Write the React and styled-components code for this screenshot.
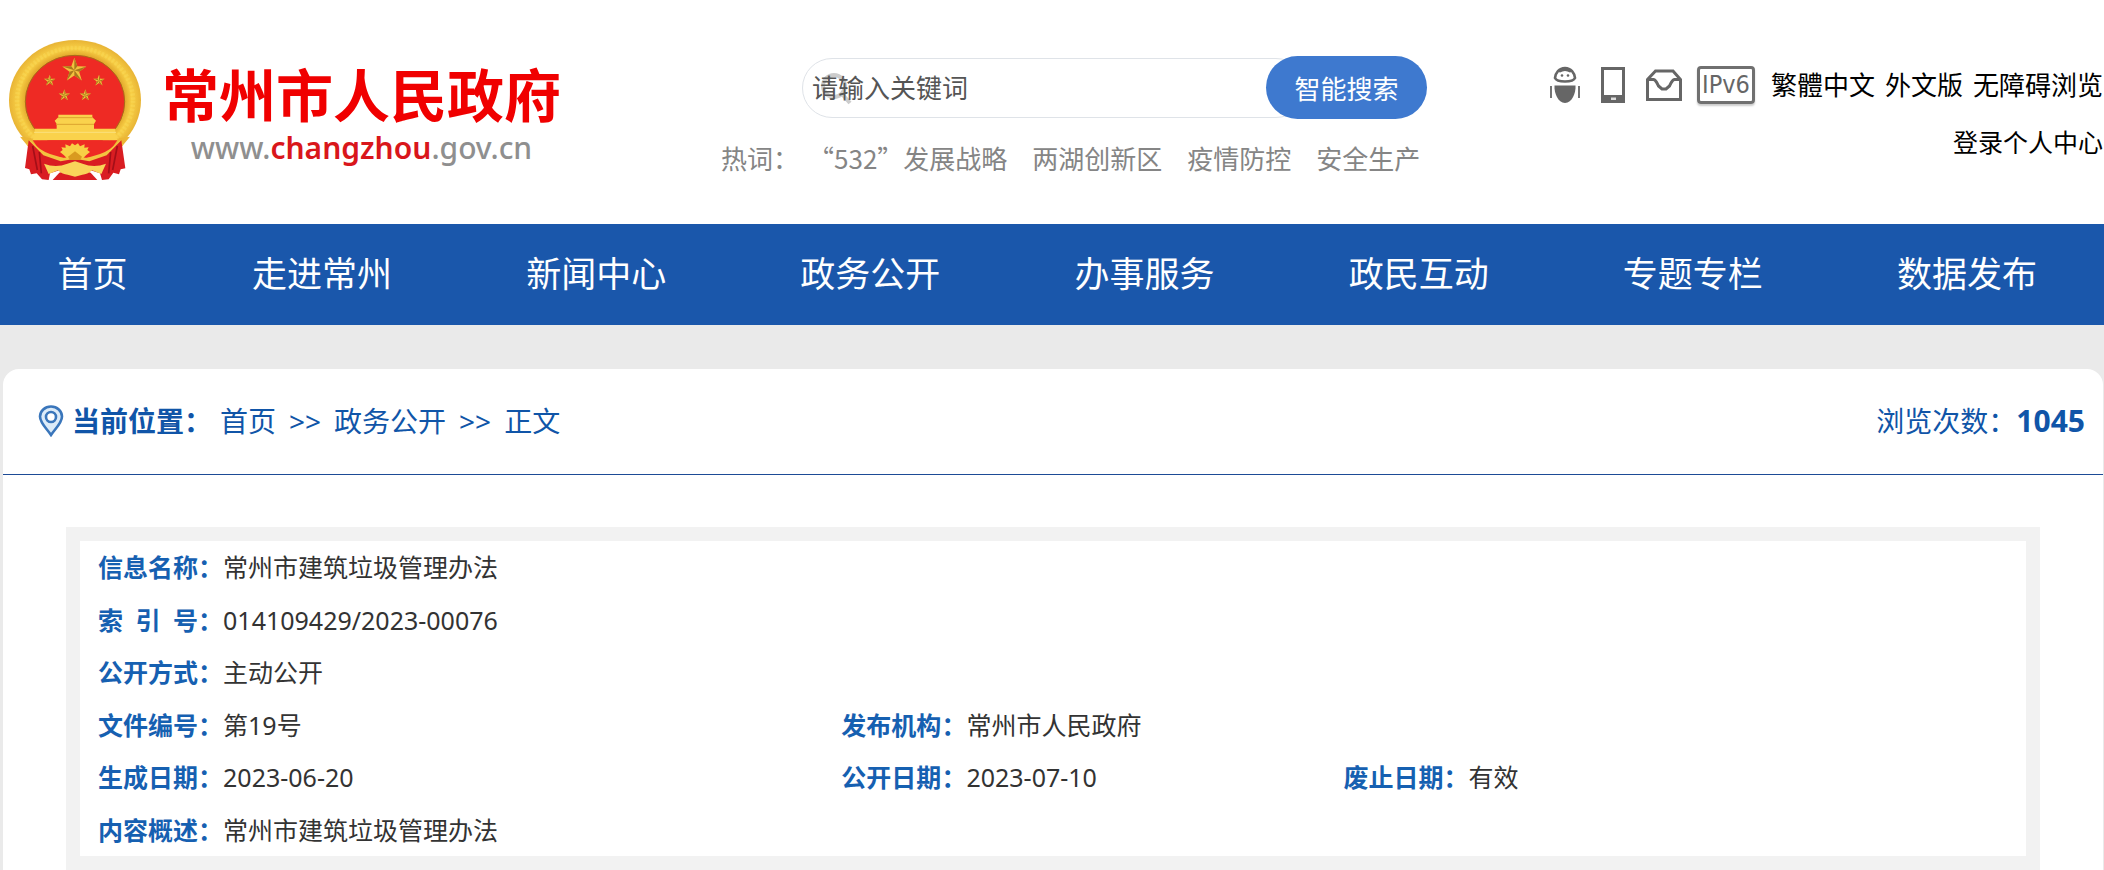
import styled, { createGlobalStyle } from 'styled-components'

const GlobalStyle = createGlobalStyle`
  * {
    box-sizing: border-box;
  }
  body {
    margin: 0;
    background: #eaeaea;
    font-family: 'Noto Sans', 'Noto Sans CJK SC', sans-serif;
    color: #333;
  }
  a {
    color: inherit;
    text-decoration: none;
  }
`

const Header = styled.header`
  display: grid;
  grid-template-columns: 721fr 706fr 677fr;
  height: 224px;
  background: #fff;
`

const Logo = styled.a`
  display: flex;
  padding: 40px 0 0 9px;
`

const LogoText = styled.div`
  display: flex;
  flex-direction: column;
  align-items: center;
  margin-left: 21px;
  padding-top: 26px;
`

const SiteName = styled.h1`
  margin: 0;
  font-family: 'Liberation Sans', 'Noto Sans CJK SC', sans-serif;
  font-size: 57px;
  line-height: 62px;
  font-weight: 700;
  color: #f00000;
`

const SiteUrl = styled.span`
  font-family: 'Noto Sans', sans-serif;
  font-size: 30px;
  line-height: 40px;
  font-weight: 500;
  color: #8f8f8f;
`

const UrlName = styled.b`
  font-weight: 600;
  color: #d9161b;
`

const Search = styled.div`
  padding-top: 56px;
`

const SearchForm = styled.form`
  position: relative;
  display: flex;
  align-items: center;
  margin-left: 81px;
`

const SearchIcon = styled.svg`
  position: absolute;
  left: 18px;
  top: 16px;
`

const SearchInput = styled.input`
  position: relative;
  flex: 1;
  min-width: 0;
  height: 60px;
  margin-right: -40px;
  padding: 0 50px 0 9px;
  border: 1px solid #dfe3e8;
  border-radius: 30px;
  background: transparent;
  font: inherit;
  font-size: 26px;
  outline: none;
  &::placeholder {
    color: #555;
    opacity: 1;
  }
`

const SearchButton = styled.button`
  position: relative;
  width: 161px;
  height: 63px;
  border: none;
  border-radius: 32px;
  background: #3e79cf;
  color: #fff;
  font: inherit;
  font-size: 26px;
  cursor: pointer;
`

const HotWords = styled.div`
  display: flex;
  gap: 25px;
  margin-top: 19px;
  font-family: 'Noto Sans CJK SC', sans-serif;
  font-size: 26px;
  line-height: 40px;
  color: #858585;
  white-space: nowrap;
`

const HotLabel = styled.span`
  margin-right: -16px;
`

const Tools = styled.div`
  display: flex;
  flex-direction: column;
  align-items: flex-end;
  padding: 65px 1px 0 0;
  color: #000;
  white-space: nowrap;
`

const ToolRow = styled.div`
  display: flex;
  align-items: center;
  gap: 10px;
  font-size: 26px;
  line-height: 40px;
`

const IconLinks = styled.div`
  display: flex;
  align-items: center;
  gap: 21px;
  margin-right: 6px;
  color: #666;
  a {
    display: flex;
  }
`

const Ipv6 = styled.a`
  justify-content: center;
  width: 58px;
  height: 38px;
  margin-left: -6px;
  border: 3px solid #707070;
  border-radius: 4px;
  box-shadow: 0 2px 2px #ccc;
  font-family: 'Liberation Sans Narrow', 'DejaVu Sans Condensed', sans-serif;
  font-size: 25px;
  line-height: 32px;
`

const Login = styled.a`
  margin-top: 17px;
  font-size: 25px;
  line-height: 40px;
`

const Nav = styled.nav`
  display: flex;
  align-items: center;
  height: 101px;
  padding-bottom: 2px;
  background: #1a57ab;
`

const NavItem = styled.a`
  flex: ${props => (props.$short ? '0 0 185px' : '1')};
  font-size: 35px;
  line-height: 50px;
  text-align: center;
  color: #fff;
`

const Card = styled.main`
  margin: 44px 1px 0 3px;
  border-radius: 16px 16px 0 0;
  background: #fff;
`

const Position = styled.div`
  display: flex;
  align-items: center;
  height: 106px;
  padding: 0 18px 2px 35px;
  border-bottom: 1px solid #1d4b96;
  font-size: 28px;
  line-height: 40px;
  color: #1055a8;
`

const Crumbs = styled.div`
  display: flex;
  flex: 1;
  b {
    margin: 0 8px;
  }
`

const Separator = styled.span`
  margin: 0 13px;
`

const Count = styled.b`
  font-size: 30px;
`

const Details = styled.section`
  margin: 52px 63px 0;
  border: 14px solid #f2f2f2;
`

const Table = styled.table`
  width: 100%;
  height: 315px;
  border-collapse: collapse;
  table-layout: fixed;
  font-size: 25px;
  line-height: 36px;
`

const Cell = styled.td`
  padding: 0 0 0 18px;
`

const Label = styled.b`
  color: #1660b1;
`

const navItems = [
  '首页',
  '走进常州',
  '新闻中心',
  '政务公开',
  '办事服务',
  '政民互动',
  '专题专栏',
  '数据发布'
]

const hotWords = ['“532”发展战略', '两湖创新区', '疫情防控', '安全生产']

const rows = [
  [['信息名称', '常州市建筑垃圾管理办法']],
  [['索\u2002引\u2002号', '014109429/2023-00076']],
  [['公开方式', '主动公开']],
  [
    ['文件编号', '第19号'],
    ['发布机构', '常州市人民政府']
  ],
  [
    ['生成日期', '2023-06-20'],
    ['公开日期', '2023-07-10'],
    ['废止日期', '有效']
  ],
  [['内容概述', '常州市建筑垃圾管理办法']]
]

const Star = ({ x, y, r }) => (
  <g transform={`translate(${x} ${y}) scale(${r})`}>
    <path
      d="M0-1 .24-.32 .95-.31 .38 .12 .59 .81 0 .4-.59 .81-.38 .12-.95-.31-.24-.32Z"
      fill="#f3c13e"
    />
    <path
      d="M0-1V0L.24-.32ZM.95-.31 0 0 .38 .12ZM.59 .81 0 0V.4ZM-.59 .81 0 0-.38 .12ZM-.95-.31 0 0-.24-.32Z"
      fill="#a9791c"
    />
  </g>
)

const Emblem = () => (
  <svg width="132" height="140" viewBox="27 30 396 420" aria-hidden="true">
    <defs>
      <radialGradient id="gold">
        <stop offset="0.74" stopColor="#e0a52a" />
        <stop offset="0.86" stopColor="#f8cf45" />
        <stop offset="1" stopColor="#e8b435" />
      </radialGradient>
    </defs>
    <ellipse cx="225" cy="211" rx="198" ry="181" fill="url(#gold)" />
    <path d="M60 320 120 392 225 425 330 392 390 320 225 340Z" fill="#ecb634" />
    <ellipse
      cx="225"
      cy="212"
      rx="174"
      ry="158"
      fill="none"
      stroke="#fbdc5c"
      strokeWidth="14"
      strokeDasharray="7 5"
      opacity="0.4"
    />
    <ellipse
      cx="225"
      cy="215"
      rx="149"
      ry="139"
      fill="#ee2a24"
      stroke="#a86a18"
      strokeWidth="3"
    />
    <Star x={223} y={121} r={38} />
    <Star x={149} y={152} r={18} />
    <Star x={297} y={152} r={18} />
    <Star x={193} y={196} r={18} />
    <Star x={256} y={196} r={18} />
    <path
      d="M175 254H277V262L288 272 282 282V296H346V308L352 331H98L104 308V296H170V282L164 272 175 262Z"
      fill="#fad24c"
    />
    <path d="M174 263H278M168 283H282" stroke="#dda32e" strokeWidth="3" />
    <path d="M102 307H348" stroke="#fbe07c" strokeWidth="3" />
    <path d="M98 331H352Q330 368 300 378L225 388 150 378Q120 368 98 331Z" fill="#ee2a24" />
    <path
      d="M92 331Q118 362 150 372L190 384Q225 376 260 384L300 372Q332 362 358 331L370 345 300 402H150L80 345Z"
      fill="#f3c440"
    />
    <path
      d="M86 331 130 376 182 394 225 386 268 394 320 376 364 331 376 415 362 418 357 433 340 428 326 448 306 450 300 430 225 406 150 430 146 450 126 448 110 430 93 433 88 418 75 414Z"
      fill="#d91d22"
    />
    <path
      d="M98 348 112 420M118 366 124 430M352 348 338 420M332 366 326 430"
      stroke="#a40f18"
      strokeWidth="5"
      fill="none"
    />
    <path d="M158 450 178 428 225 412 272 428 292 450Z" fill="#d91d22" />
    <path
      d="M192 376 180 366 188 360 184 352 197 353 196 343 210 349 216 340 225 346 234 340 240 349 254 343 253 353 266 352 262 360 270 366 258 376 250 384H200Z"
      fill="#f8cf45"
    />
    <path d="M204 380 225 364 246 380 240 390H210Z" fill="#d99a20" />
    <path
      d="M132 401Q168 415 202 401L225 394 248 401Q282 415 318 401L304 432 276 421Q262 434 247 434L225 440 203 434Q188 434 174 421L146 432Z"
      fill="#f9d45a"
    />
  </svg>
)

const RobotIcon = () => (
  <svg width="30" height="38" viewBox="0 0 30 38" fill="currentColor" aria-hidden="true">
    <path
      d="M15 2C9 2 5.500 7 5 12 6 14.300 9.500 15.500 15 15.500S24 14.300 25 12C24.500 7 21 2 15 2Z"
      fill="#fff"
      stroke="currentColor"
      strokeWidth="2.6"
    />
    <path d="M7.500 5.500Q15-3 22.500 5.500L20 6.500Q15 3.500 10 6.500Z" />
    <circle cx="12" cy="9.500" r="1.300" />
    <circle cx="18" cy="9.500" r="1.300" />
    <path d="M4.500 19.500H25.500C26 27 22 37 15 37S4 27 4.500 19.500Z" />
    <path d="M1 20V32M29 20V32" stroke="currentColor" strokeWidth="1.800" />
  </svg>
)

const PhoneIcon = () => (
  <svg width="24" height="36" viewBox="0 0 24 36" aria-hidden="true">
    <rect x="1.5" y="1.500" width="21" height="33" fill="#fff" stroke="currentColor" strokeWidth="3" />
    <path d="M1 28H23V35H1Z" fill="currentColor" />
    <rect x="10" y="30.500" width="5" height="2.500" fill="#ddd" />
  </svg>
)

const MailIcon = () => (
  <svg
    width="36"
    height="32"
    viewBox="0 0 36 32"
    fill="none"
    stroke="currentColor"
    strokeWidth="3"
    aria-hidden="true"
  >
    <path d="M1.500 10.500 9.500 2H27L34.500 10.500V30.500H1.500Z" />
    <path d="M1.500 10.500H7.500C10 11 11 14 12.500 17L16 20H20L23.500 17C25 14 26 11 28.500 10.500H34.500" />
  </svg>
)

const PinIcon = () => (
  <svg
    width="26"
    height="32"
    viewBox="0 0 26 32"
    fill="none"
    stroke="#3a76bb"
    strokeWidth="2.6"
    aria-hidden="true"
  >
    <path
      d="M13 30C9 24 2 18 2 11.500A11 10 0 0 1 24 11.500C24 18 17 24 13 30Z"
      fill="#dcebf8"
    />
    <circle cx="13" cy="12" r="5" fill="#fff" />
  </svg>
)

const App = () => {
  return (
    <>
      <GlobalStyle />
      <Header>
        <Logo href="#">
          <Emblem />
          <LogoText>
            <SiteName>常州市人民政府</SiteName>
            <SiteUrl>
              www.<UrlName>changzhou</UrlName>.gov.cn
            </SiteUrl>
          </LogoText>
        </Logo>
        <Search>
          <SearchForm>
            <SearchIcon width="33" height="34" fill="none" stroke="#ccc" strokeWidth="4" aria-hidden="true">
              <circle cx="14" cy="14" r="11" />
              <path d="M22 22 30 31" />
            </SearchIcon>
            <SearchInput type="text" aria-label="请输入关键词" placeholder="请输入关键词" />
            <SearchButton type="button">智能搜索</SearchButton>
          </SearchForm>
          <HotWords>
            <HotLabel>热词：</HotLabel>
            {hotWords.map(word => (
              <a href="#" key={word}>
                {word}
              </a>
            ))}
          </HotWords>
        </Search>
        <Tools>
          <ToolRow>
            <IconLinks>
              <a href="#" aria-label="智能机器人">
                <RobotIcon />
              </a>
              <a href="#" aria-label="手机版">
                <PhoneIcon />
              </a>
              <a href="#" aria-label="邮箱">
                <MailIcon />
              </a>
              <Ipv6 href="#">IPv6</Ipv6>
            </IconLinks>
            <a href="#">繁體中文</a>
            <a href="#">外文版</a>
            <a href="#">无障碍浏览</a>
          </ToolRow>
          <Login href="#">登录个人中心</Login>
        </Tools>
      </Header>
      <Nav>
        {navItems.map(item => (
          <NavItem href="#" key={item} $short={item.length === 2}>
            {item}
          </NavItem>
        ))}
      </Nav>
      <Card>
        <Position>
          <PinIcon />
          <Crumbs>
            <b>当前位置：</b>
            <a href="#">首页</a>
            <Separator>&gt;&gt;</Separator>
            <a href="#">政务公开</a>
            <Separator>&gt;&gt;</Separator>
            <span>正文</span>
          </Crumbs>
          <span>浏览次数：</span>
          <Count>1045</Count>
        </Position>
        <Details>
          <Table>
            <colgroup>
              <col width="38.2%" />
              <col width="25.8%" />
              <col />
            </colgroup>
            <tbody>
              {rows.map(cells => (
                <tr key={cells[0][0]}>
                  {cells.map(([label, value], i) => (
                    <Cell key={label} colSpan={i === cells.length - 1 ? 3 - i : 1}>
                      <Label>{label}：</Label>
                      {value}
                    </Cell>
                  ))}
                </tr>
              ))}
            </tbody>
          </Table>
        </Details>
      </Card>
    </>
  )
}

export default App
